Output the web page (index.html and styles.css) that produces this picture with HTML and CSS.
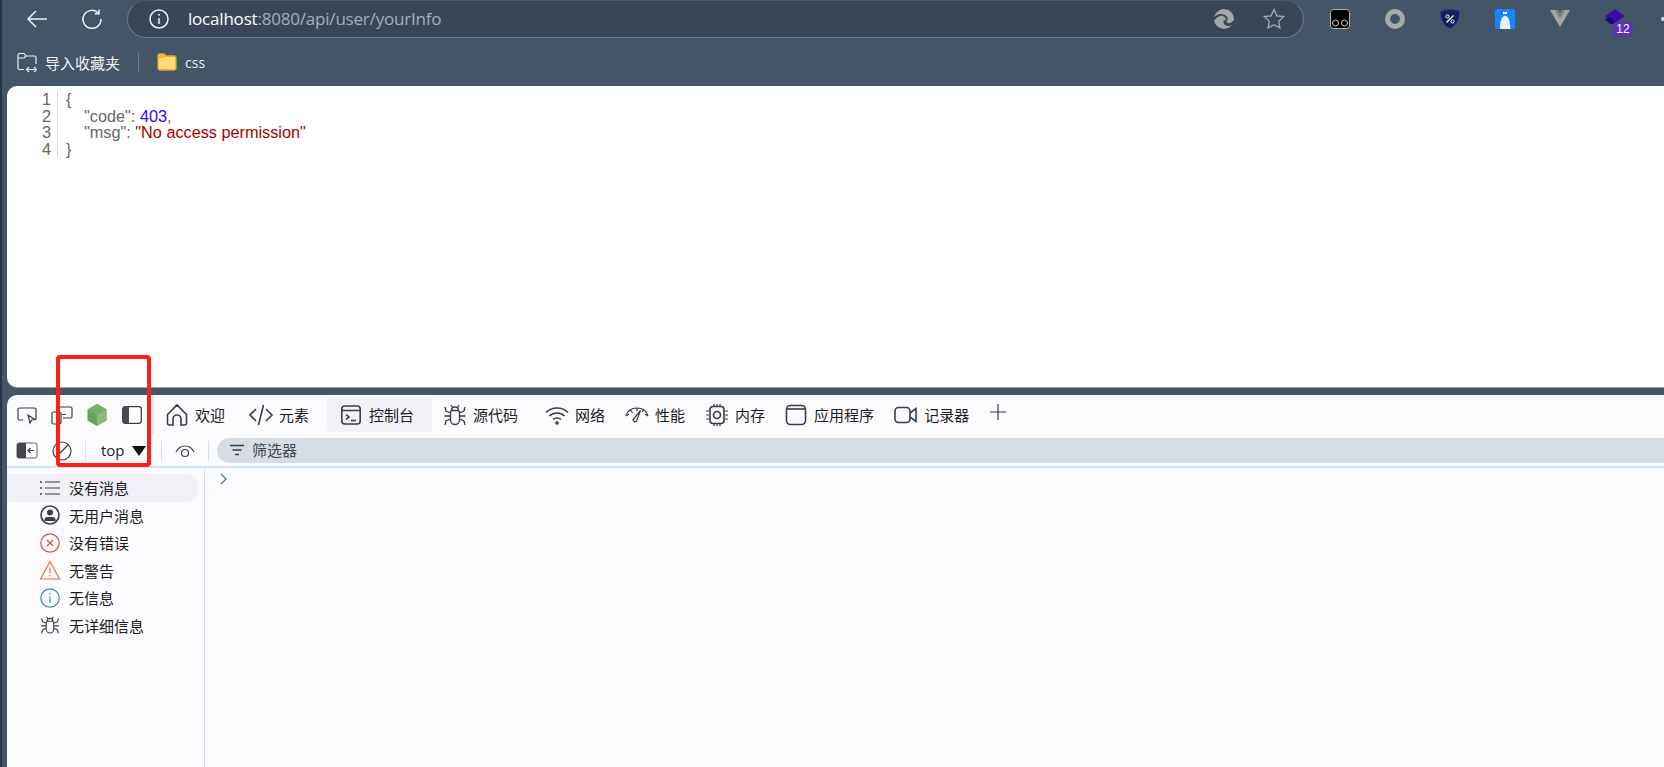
FILE: index.html
```html
<!DOCTYPE html>
<html lang="zh">
<head>
<meta charset="utf-8">
<title>localhost:8080/api/user/yourInfo</title>
<link rel="stylesheet" href="styles.css">
</head>
<body>
<div class="window">
  <header class="navbar">
    <button class="nav-btn nav-back" aria-label="back"><svg viewBox="0 0 20 20" width="20" height="20"><path d="M20 10H1M9 2l-8 8 8 8" class="st-w"/></svg></button>
    <button class="nav-btn nav-reload" aria-label="reload"><svg viewBox="0 0 20 20" width="20" height="20"><path d="M16.6 4.2A9 9 0 1 0 19 10M17 .5v4.2h-4.2" class="st-w"/></svg></button>
    <div class="address">
      <svg class="addr-info" viewBox="0 0 20 20" width="20" height="20"><circle cx="10" cy="10" r="9" class="st-w"/><path d="M10 9v6" class="st-w"/><circle cx="10" cy="5.7" r="1" fill="#eef1f4"/></svg>
      <span class="url"><b>localhost</b>:8080/api/user/yourInfo</span>
      <svg class="addr-edge" viewBox="0 0 22 22" width="22" height="22"><circle cx="11" cy="11" r="10" fill="#a4a7aa"/><path d="M1 11.500C3.500 6.500 9.500 5.500 12.500 8.500c2.300 2.300 1.300 5-1 4.800-.5 3.500 5 6 9.500.5" fill="none" stroke="#3a4658" stroke-width="1.800"/><path d="M21.500 13.500c-3 4-8 3.500-10 .5" fill="none" stroke="#3a4658" stroke-width="2.500"/></svg>
      <svg class="addr-star" viewBox="0 0 22 22" width="22" height="22"><path d="M11 1.500l2.900 6.300 6.800.8-5 4.700 1.300 6.800-6-3.400-6 3.400 1.300-6.800-5-4.700 6.800-.8z" fill="none" stroke="#a4a9b0" stroke-width="1.300"/></svg>
    </div>
    <div class="extensions">
      <svg viewBox="0 0 20 20" width="20" height="20"><rect x=".5" y=".5" width="19" height="19" rx="3" fill="#000" stroke="#b5b5b5"/><circle cx="5.500" cy="14" r="3" fill="none" stroke="#ccc"/><circle cx="14.500" cy="14" r="3" fill="none" stroke="#ccc"/></svg>
      <svg viewBox="0 0 20 20" width="20" height="20"><circle cx="10" cy="10" r="7.500" fill="none" stroke="#a9a9a9" stroke-width="5"/></svg>
      <svg viewBox="0 0 20 20" width="20" height="20"><path d="M10 .5c3 0 6 .6 9.500 2C19.500 11 16 17 10 19.500 4 17 .5 11 .5 2.500 4 1.100 7 .5 10 .5z" fill="#11205e" stroke="#2c3f86"/><path d="M6.500 13.500l7-7" stroke="#fff" stroke-width="1.300"/><circle cx="7.500" cy="7.500" r="1.600" fill="none" stroke="#fff"/><circle cx="12.500" cy="12.500" r="1.600" fill="none" stroke="#fff"/></svg>
      <svg viewBox="0 0 20 20" width="20" height="20"><rect width="20" height="20" rx="2.500" fill="#1a84ff"/><path d="M5 20c0-6 .5-11 4-13 3-1 4.500 2 5.500 5l1 8z" fill="#e8f2fb"/><path d="M8 5V2.500l2 1 2-1V5z" fill="#fff"/></svg>
      <svg viewBox="0 0 20 20" width="20" height="20"><path d="M0 1h6l4 7 4-7h6L10 18z" fill="#a6a6a6"/><path d="M5 1h3.500L10 4l1.500-3H15l-5 9z" fill="#7c7f85"/></svg>
      <span class="ext-hat">
        <svg viewBox="0 0 20 20" width="20" height="20"><path d="M10 0l10 7-10 7L0 7z" fill="#3f0ba8"/><path d="M0 10l4-2 6 4v3H5z" fill="#1c0a78"/></svg>
        <span class="badge">12</span>
      </span>
      <i class="ext-more"></i>
    </div>
  </header>

  <nav class="bookmarks">
    <svg class="bm-import" viewBox="0 0 20 20" width="20" height="20"><path d="M7 17.500H2.500A1.500 1.500 0 0 1 1 16V3a1.500 1.500 0 0 1 1.500-1.500H7l2 2.500h8.500A1.500 1.500 0 0 1 19 5.500V12M1 6h6l2-2" class="st-w thin"/><path d="M10 17.500h9M12 15l-2.500 2.500L12 20M17 15l2.500 2.500L17 20" class="st-w thin"/></svg>
    <span class="bm-text">导入收藏夹</span>
    <i class="bm-sep"></i>
    <svg class="bm-folder" viewBox="0 0 20 18" width="20" height="18"><path d="M1 3a2 2 0 0 1 2-2h4l2 2h8a2 2 0 0 1 2 2v10a2 2 0 0 1-2 2H3a2 2 0 0 1-2-2z" fill="#ffd97a" stroke="#d9a53a" stroke-width="1.300"/><path d="M1 3a2 2 0 0 1 2-2h4l2 2-2 2H1z" fill="#f2b632"/></svg>
    <span class="bm-text bm-css">css</span>
  </nav>

  <main class="page">
    <div class="gutter"><span>1</span><span>2</span><span>3</span><span>4</span></div>
    <pre class="code"><span>{</span>
    <span>"code": <em class="num">403</em>,</span>
    <span>"msg": <em class="str">"No access permission"</em></span>
<span>}</span></pre>
  </main>

  <section class="devtools">
    <div class="tabs">
      <div class="tool-icons">
        <svg viewBox="0 0 20 18" width="20" height="18"><path d="M6 14H2.500A1.500 1.500 0 0 1 1 12.500v-9A1.500 1.500 0 0 1 2.500 2h15A1.500 1.500 0 0 1 19 3.500v9a1.500 1.500 0 0 1-1 1.400M11 9l2 8 1.500-3 3.500-.5z" class="st-d thin"/></svg>
        <svg viewBox="0 0 20 18" width="20" height="18"><path d="M6 3.500V2.500A1.500 1.500 0 0 1 7.500 1h11A1.500 1.500 0 0 1 20 2.500v8a1.500 1.500 0 0 1-1.500 1.500H11M1.500 6h6A1.500 1.500 0 0 1 9 7.500v9A1.500 1.500 0 0 1 7.500 18H1.500A1.500 1.500 0 0 1 0 16.500v-9A1.500 1.500 0 0 1 1.500 6zM10 8.500h4" class="st-d thin"/></svg>
        <svg viewBox="0 0 20 22" width="20" height="22"><path d="M10 0l9.500 5.500v11L10 22 .5 16.500v-11z" fill="#6aa356"/><path d="M10 0l9.500 5.500v11L10 22z" fill="#8db97e"/><path d="M10 0L.5 5.500 10 11l9.500-5.500z" fill="#78ad66"/></svg>
        <svg viewBox="0 0 20 18" width="20" height="18"><rect x=".7" y=".7" width="18.600" height="16.600" rx="2.500" fill="#fff" stroke="#3b3d42" stroke-width="1.300"/><path d="M3 .7h4v16.600H3A2.300 2.300 0 0 1 .7 15V3A2.300 2.300 0 0 1 3 .7z" fill="#4a4c51"/></svg>
      </div>
      <i class="tabs-sep"></i>
      <div class="tab tab-home"><svg viewBox="0 0 24 24" width="24" height="24"><path d="M4.500 22a2 2 0 0 1-2-2v-8.500L12 2l9.500 9.500V20a2 2 0 0 1-2 2H16v-6a4 4 0 0 0-8 0v6z" class="st-d"/></svg><span>欢迎</span></div>
      <div class="tab tab-elements"><svg viewBox="0 0 24 24" width="24" height="24"><path d="M7 6l-6 6 6 6M17 6l6 6-6 6M14.500 2l-5 20" class="st-d"/></svg><span>元素</span></div>
      <div class="tab tab-console"><svg viewBox="0 0 24 24" width="24" height="24"><rect x="2.800" y="3" width="18.400" height="18" rx="3" class="st-d"/><path d="M3 7.500h18M7 11.500l3 2.500-3 2.500M12 17.500h5" class="st-d"/></svg><span>控制台</span></div>
      <div class="tab tab-sources"><svg viewBox="0 0 24 24" width="24" height="24"><use href="#bug"/></svg><span>源代码</span></div>
      <div class="tab tab-network"><svg viewBox="0 0 24 24" width="24" height="24"><path d="M1 9.500c6-6 16-6 22 0M4.500 13c4-4 11-4 15 0M8 16.500c2-2 6-2 8 0" class="st-d"/><circle cx="12" cy="20" r="1.800" fill="#3b3d42"/></svg><span>网络</span></div>
      <div class="tab"><svg viewBox="0 0 24 24" width="24" height="24"><path d="M1 13C2.500 7.500 7 5 12 5s9.500 2.500 11 8M1 13l3-2M5.500 7l2 3M12 5v3M18.500 7l-1.500 2M23 13l-3-2" class="st-d thin"/><path d="M15.500 7.500L11.500 18a2 2 0 0 1-3.500-1.200z" class="st-d thin"/></svg><span>性能</span></div>
      <div class="tab"><svg viewBox="0 0 24 24" width="24" height="24"><rect x="5" y="3.500" width="14" height="17" rx="3" class="st-d"/><circle cx="12" cy="12" r="3.500" class="st-d"/><path d="M1 8h3M1 12h3M1 16h3M20 8h3M20 12h3M20 16h3M9 1v2M12 1v2M15 1v2M9 21v2M12 21v2M15 21v2" class="st-d thin"/></svg><span>内存</span></div>
      <div class="tab tab-app"><svg viewBox="0 0 24 24" width="24" height="24"><rect x="2.500" y="2.500" width="19" height="19" rx="4" class="st-d"/><path d="M2.500 6h19" class="st-d"/></svg><span>应用程序</span></div>
      <div class="tab"><svg viewBox="0 0 24 24" width="24" height="24"><rect x="1" y="4.500" width="15" height="15" rx="3.500" class="st-d"/><path d="M16 10l6-4.500v13L16 14" class="st-d"/></svg><span>记录器</span></div>
      <svg class="tab-plus" viewBox="0 0 18 18" width="18" height="18"><path d="M9 1v16M1 9h16" class="st-d thin"/></svg>
    </div>

    <div class="filterbar">
      <svg class="fb-panel" viewBox="0 0 20 15" width="20" height="15"><rect width="20" height="15" rx="2" fill="#fff" stroke="#3b3d42" stroke-width=".8"/><path d="M2 0h7v15H2a2 2 0 0 1-2-2V2a2 2 0 0 1 2-2z" fill="#45474c"/><path d="M17 7.500h-6M13.500 5l-2.500 2.500 2.500 2.500" class="st-d thin"/></svg>
      <svg class="fb-clear" viewBox="0 0 20 20" width="20" height="20"><circle cx="10" cy="10" r="9" class="st-d thin"/><path d="M4 16L16 4" class="st-d thin"/></svg>
      <i class="fb-sep sep-a"></i>
      <span class="fb-top">top</span>
      <svg class="fb-caret" viewBox="0 0 14 10" width="14" height="10"><path d="M0 0h14L7 10z" fill="#111"/></svg>
      <i class="fb-sep sep-b"></i>
      <svg class="fb-eye" viewBox="0 0 20 14" width="20" height="14"><path d="M1 8c4-8 14-8 18 0" class="st-d thin"/><circle cx="10" cy="9" r="3.500" class="st-d thin"/></svg>
      <i class="fb-sep sep-c"></i>
      <div class="filter-pill">
        <svg viewBox="0 0 14 12" width="14" height="12"><path d="M0 1.500h14M2.500 6h9M5 10.500h4" class="st-d"/></svg>
        <span>筛选器</span>
      </div>
    </div>

    <div class="console">
      <aside class="sidebar">
        <div class="row active"><svg viewBox="0 0 20 16" width="20" height="16"><path d="M5 2h15M5 8h15M5 14h15" class="st-d thin"/><circle cx="1" cy="2" r="1" fill="#3b3d42"/><circle cx="1" cy="8" r="1" fill="#3b3d42"/><circle cx="1" cy="14" r="1" fill="#3b3d42"/></svg><span>没有消息</span></div>
        <div class="row"><svg viewBox="0 0 20 20" width="20" height="20"><circle cx="10" cy="10" r="9" class="st-d"/><circle cx="10" cy="7.500" r="3" fill="#3b3d42"/><path d="M4.500 15a3 3 0 0 1 3-3h5a3 3 0 0 1 3 3v1H4.500z" fill="#3b3d42"/></svg><span>无用户消息</span></div>
        <div class="row"><svg viewBox="0 0 20 20" width="20" height="20"><circle cx="10" cy="10" r="9.200" fill="none" stroke="#e5484d" stroke-width="1.200"/><path d="M7 7l6 6M13 7l-6 6" fill="none" stroke="#e5484d" stroke-width="1.200"/></svg><span>没有错误</span></div>
        <div class="row"><svg viewBox="0 0 20 20" width="20" height="20"><path d="M10 1.500L19.500 19H.5z" fill="none" stroke="#e8743b" stroke-width="1.200"/><path d="M10 7.500v6M10 15v1.500" stroke="#e8743b" stroke-width="1.200"/></svg><span>无警告</span></div>
        <div class="row"><svg viewBox="0 0 20 20" width="20" height="20"><circle cx="10" cy="10" r="9.200" fill="none" stroke="#4a86c0" stroke-width="1.200"/><path d="M10 8.500V15M10 5v1.500" stroke="#4a86c0" stroke-width="1.200"/></svg><span>无信息</span></div>
        <div class="row"><svg viewBox="0 0 24 24" width="22" height="22"><use href="#bug"/></svg><span>无详细信息</span></div>
      </aside>
      <div class="prompt"><svg viewBox="0 0 8 12" width="8" height="12"><path d="M1 1l5 5-5 5" fill="none" stroke="#3f7fc1" stroke-width="1.400"/></svg></div>
    </div>
  </section>

  <div class="annotation"></div>
</div>

<svg class="defs" width="0" height="0"><defs><g id="bug"><path d="M7.500 9.500a2 2 0 0 1 2-2h5a2 2 0 0 1 2 2v7.500a4.500 4.500 0 0 1-9 0zM8.500 7.500c0-2 1.500-3.500 3.500-3.500s3.500 1.500 3.500 3.500M8 2l1.500 2.500M16 2l-1.500 2.500M7.500 10L3 8 2 4M16.500 10L21 8l1-4M7.500 13H1.500M16.500 13h6M7.500 16L3 18l-1 4M16.500 16L21 18l1 4" fill="none" stroke="#3b3d42" stroke-width="1.300"/></g></defs></svg>
</body>
</html>
```

FILE: styles.css
```css
* { box-sizing: border-box; }
html, body { margin: 0; height: 100%; overflow: hidden; }
body { font-family: "Open Sans", "Noto Sans CJK SC", sans-serif; }

.st-w { fill: none; stroke: #eef1f4; stroke-width: 1.500; }
.st-d { fill: none; stroke: #3b3d42; stroke-width: 1.600; }
.thin { stroke-width: 1.200; }
.defs { position: absolute; }
svg { display: block; flex: none; overflow: visible; }

.window {
  position: relative;
  width: 1664px;
  height: 767px;
  display: flex;
  flex-direction: column;
  background: #455568;
  border-left: 2px solid #2c3444;
  overflow: hidden;
}

/* top bar */
.navbar { height: 38px; flex: none; display: flex; align-items: center; }
.nav-btn { width: 20px; height: 20px; padding: 0; border: 0; background: none; }
.nav-back { margin-left: 25px; }
.nav-reload { margin-left: 35px; }
.address {
  margin-left: 25px;
  width: 1177px;
  height: 38px;
  flex: none;
  display: flex;
  align-items: center;
  background: #3a4658;
  border: 1px solid #6f7a88;
  border-top-color: #4b5869;
  border-radius: 19px;
}
.addr-info { margin-left: 21px; }
.url { margin: -2px 0 0 19px; font-size: 17px; letter-spacing: -.2px; color: #a5adb8; white-space: nowrap; }
.url b { font-weight: 400; color: #fff; }
.addr-edge { margin-left: auto; }
.addr-star { margin: 0 18px 0 28px; }
.extensions { display: flex; align-items: center; gap: 35px; margin-left: 26px; height: 38px; }
.ext-hat { position: relative; display: block; }
.badge {
  position: absolute; left: 8px; top: 13px;
  width: 20px; height: 15px;
  border-radius: 4px;
  background: #5d33b5;
  color: #fff;
  font: 12px/15px "Liberation Sans", sans-serif;
  text-align: center;
}
.ext-more { width: 4px; height: 4px; border-radius: 50%; background: #d7dbe0; margin-left: 1px; }

/* bookmarks */
.bookmarks { height: 48px; flex: none; display: flex; align-items: center; color: #f1f3f5; }
.bm-import { margin-left: 15px; }
.bm-text { margin-left: 8px; font-size: 15px; }
.bm-css { font-size: 14px; }
.bm-sep { width: 1px; height: 20px; background: #717d8b; margin: 0 18px; }

/* page */
.page {
  height: 301px;
  flex: none;
  margin-left: 5px;
  background: #fff;
  border-radius: 10px 0 0 10px;
  display: flex;
  align-items: flex-start;
  padding-top: 5px;
  font: 16.250px/16.500px "Liberation Sans", sans-serif;
  color: #666;
  box-shadow: 0 1px 0 #99a2ad;
}
.gutter { width: 51px; display: flex; flex-direction: column; align-items: flex-end; padding-right: 6px; border-right: 1px solid #d8d8d8; }
.code { margin: 0 0 0 8px; font: inherit; }
.code em { font-style: normal; }
.num { color: #3a00ff; }
.str { color: #a80000; }

/* devtools */
.devtools {
  flex: 1;
  margin: 8px 0 0 5px;
  background: #fbfbfe;
  border-radius: 10px 0 0 0;
  display: flex;
  flex-direction: column;
  color: #1c1c1c;
  font-size: 15px;
  min-height: 0;
}

.tabs { height: 43px; flex: none; display: flex; align-items: center; padding-bottom: 4px; }
.tool-icons { display: flex; align-items: center; gap: 15px; margin-left: 10px; width: 126px; }
.tabs-sep { width: 2px; height: 40px; margin: 0 0 0 9px; background: #e7e7ea; align-self: flex-start; }
.tab { display: flex; align-items: center; gap: 6px; margin-left: 20px; height: 35px; white-space: nowrap; }
.tab-home { margin-left: 11px; }
.tab-elements { margin-left: 24px; }
.tab-console { margin-left: 18px; padding: 0 18px 0 12px; background: #f1f2f5; border-radius: 3px; }
.tab-sources { margin-left: 11px; }
.tab-network { margin-left: 27px; }
.tab-app { margin-left: 19px; }
.tab-plus { margin: -6px 0 0 20px; }

.filterbar { height: 25px; flex: none; display: flex; align-items: center; }
.fb-panel { margin-left: 10px; }
.fb-clear { margin-left: 15px; }
.fb-sep { width: 1px; height: 20px; background: #cfe2f5; }
.sep-a { margin-left: 13px; }
.fb-top { margin: -2px 0 0 15px; width: 24px; font-size: 15px; line-height: 20px; }
.fb-caret { margin-left: 7px; }
.sep-b { margin-left: 15px; }
.fb-eye { margin-left: 13px; }
.sep-c { margin-left: 13px; }
.filter-pill {
  flex: 1;
  height: 25px;
  margin-left: 8px;
  padding: 0 0 2px 13px;
  display: flex;
  align-items: center;
  gap: 8px;
  background: #d6dde5;
  border-radius: 13px 0 0 13px;
  color: #44474c;
}

.console { flex: 1; min-height: 0; display: flex; margin-top: 3px; border-top: 2px solid #cfe4fb; }
.sidebar { width: 198px; flex: none; padding-top: 6px; border-right: 1px solid #cfe4fb; }
.row { height: 27.500px; display: flex; align-items: center; padding-left: 33px; gap: 9px; white-space: nowrap; width: 192px; border-radius: 0 14px 14px 0; }
.row svg { width: 20px; }
.row.active { background: #eff1f6; }
.prompt { padding: 5px 0 0 15px; }

/* annotation rectangle drawn on the screenshot */
.annotation {
  position: absolute;
  left: 54px;
  top: 355px;
  width: 95px;
  height: 112px;
  border: 4px solid #ff2015;
  border-radius: 4px;
}
```
